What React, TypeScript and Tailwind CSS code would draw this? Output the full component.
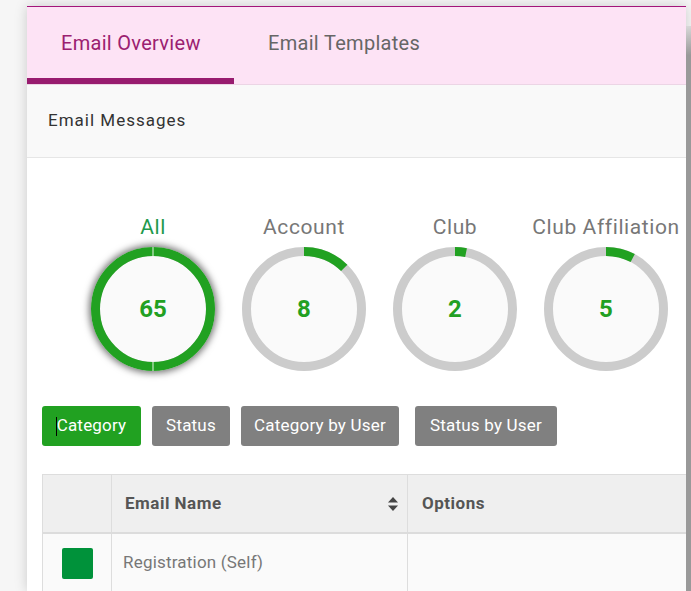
import React from 'react';

type Stat = { label: string; count: number; active?: boolean };

const TOTAL = 65;

const stats: Stat[] = [
  { label: 'All', count: 65, active: true },
  { label: 'Account', count: 8 },
  { label: 'Club', count: 2 },
  { label: 'Club Affiliation', count: 5 },
];

const filters = [
  { label: 'Category', cls: 'w-[99px] mr-[11px] bg-[#21a121]' },
  { label: 'Status', cls: 'w-[78px] mr-[11px] bg-[#808080]' },
  { label: 'Category by User', cls: 'w-[158px] mr-[16px] bg-[#808080]' },
  { label: 'Status by User', cls: 'w-[142px] bg-[#808080]' },
];

const Ring: React.FC<{ stat: Stat }> = ({ stat }) => {
  const r = 57.5;
  const c = 2 * Math.PI * r;
  const part = (stat.count / TOTAL) * c;
  return (
    <div
      className={`relative w-[124px] h-[124px] rounded-full ${
        stat.active ? 'shadow-[0_0_7px_2px_rgba(0,0,0,0.55)]' : ''
      }`}
    >
      <svg width="124" height="124" viewBox="0 0 124 124" className="block">
        <circle cx="62" cy="62" r="53" fill="#fafafa" />
        <circle cx="62" cy="62" r={r} fill="none" stroke="#cccccc" strokeWidth="9" />
        <circle
          cx="62"
          cy="62"
          r={r}
          fill="none"
          stroke="#21a121"
          strokeWidth="9"
          strokeDasharray={`${part} ${c}`}
          transform="rotate(-90 62 62)"
        />
        {stat.active && (
          <>
            <line x1="62" y1="0" x2="62" y2="10" stroke="#e8f5e8" strokeWidth="1" />
            <line x1="62" y1="114" x2="62" y2="124" stroke="#e8f5e8" strokeWidth="1" />
          </>
        )}
      </svg>
      <span className="absolute inset-0 flex items-center justify-center text-[24px] font-bold text-[#22a022]">
        {stat.count}
      </span>
    </div>
  );
};

const SortIcon: React.FC = () => (
  <svg width="10" height="14" viewBox="0 0 10 14" className="text-[#444]">
    <path d="M5 0 L10 5.5 H0 Z" fill="currentColor" />
    <path d="M5 14 L10 8.5 H0 Z" fill="currentColor" />
  </svg>
);

const App: React.FC = () => {
  return (
    <div className="w-[691px] h-[591px] overflow-hidden bg-[#f6f6f6] font-['Roboto',sans-serif]">
      <div className="flex pl-[27px] pt-[6px]">
        <div className="w-[659px] h-[585px] bg-white border-t border-[#a3157a] shadow-[0_0_12px_rgba(0,0,0,0.18)] overflow-hidden">
          {/* tabs */}
          <div className="flex h-[78px] bg-[#fde3f5] border-b border-[#ecd5e5]">
            <div className="w-[207px] flex flex-col">
              <div className="flex-1 flex items-center pl-[34px] text-[20px] tracking-[0.3px] text-[#9b2070]">
                Email Overview
              </div>
              <div className="h-[6px] bg-[#981c6f]" />
            </div>
            <div className="flex items-center pl-[34px] pb-[6px] text-[20px] tracking-[0.3px] text-[#666]">
              Email Templates
            </div>
          </div>

          {/* section header */}
          <div className="h-[73px] flex items-center pl-[21px] bg-[#f9f9f9] border-b border-[#e6e6e6] text-[17px] tracking-[1px] text-[#333]">
            Email Messages
          </div>

          {/* counters */}
          <div className="flex gap-[27px] pl-[64px] pt-[56px]">
            {stats.map((s) => (
              <div key={s.label} className="w-[124px] flex flex-col items-center">
                <div
                  className={`h-[26px] whitespace-nowrap text-[21px] leading-[26px] tracking-[0.6px] ${
                    s.active ? 'text-[#1f9a4c]' : 'text-[#777]'
                  }`}
                >
                  {s.label}
                </div>
                <div className="mt-[7px]">
                  <Ring stat={s} />
                </div>
              </div>
            ))}
          </div>

          {/* filter buttons */}
          <div className="flex pl-[15px] pt-[35px]">
            {filters.map((f, i) => (
              <button
                key={f.label}
                className={`relative h-[40px] rounded-[3px] text-[17px] tracking-[0.2px] text-white ${f.cls}`}
              >
                {i === 0 && (
                  <span className="absolute left-[14px] top-[11px] w-px h-[19px] bg-black" />
                )}
                {f.label}
              </button>
            ))}
          </div>

          {/* table */}
          <div className="ml-[15px] mt-[28px] border-l border-t border-[#dddddd]">
            <div className="flex h-[59px] bg-[#efefef] border-b-2 border-[#dcdcdc] text-[17px] tracking-[0.5px] font-bold text-[#555]">
              <div className="w-[69px] border-r border-[#dddddd]" />
              <div className="w-[296px] flex items-center justify-between pl-[13px] pr-[9px] border-r border-[#dddddd]">
                <span>Email Name</span>
                <SortIcon />
              </div>
              <div className="flex items-center pl-[14px]">Options</div>
            </div>
            <div className="flex h-[58px] bg-[#fafafa] text-[17px] tracking-[0.2px] text-[#777]">
              <div className="w-[69px] flex items-center justify-center border-r border-[#dddddd]">
                <div className="w-[31px] h-[31px] rounded-[2px] bg-[#00923a]" />
              </div>
              <div className="w-[296px] flex items-center pl-[11px] border-r border-[#dddddd]">
                Registration (Self)
              </div>
              <div />
            </div>
          </div>
        </div>
        <div className="w-[5px] h-[585px] mt-[20px] bg-gradient-to-b from-[#d8d8d8] to-[#999999] via-[#999999] via-[5%]" />
      </div>
    </div>
  );
};

export default App;
